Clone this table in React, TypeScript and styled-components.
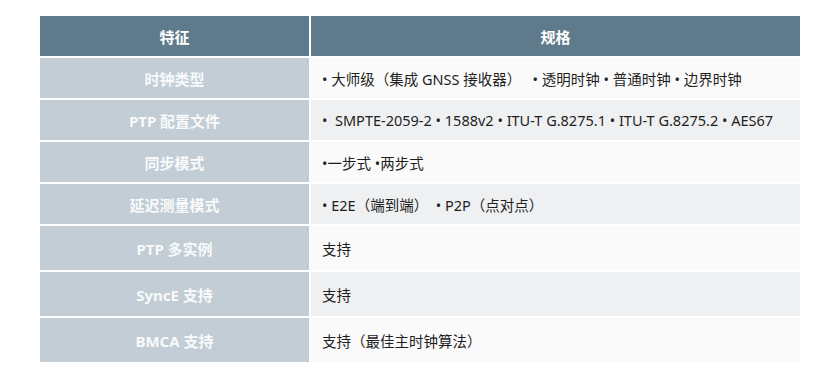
import React from 'react';
import styled, { createGlobalStyle } from 'styled-components';

const GlobalStyle = createGlobalStyle`
  html, body {
    margin: 0;
    padding: 0;
    background-color: #ffffff;
  }
`;

type Spec = {
  feature: string;
  detail: string;
  tall?: boolean;
};

const specs: Spec[] = [
  { feature: '时钟类型', detail: '• 大师级（集成 GNSS 接收器）   • 透明时钟 • 普通时钟 • 边界时钟' },
  { feature: 'PTP 配置文件', detail: '•  SMPTE-2059-2 • 1588v2 • ITU-T G.8275.1 • ITU-T G.8275.2 • AES67' },
  { feature: '同步模式', detail: '•一步式 •两步式' },
  { feature: '延迟测量模式', detail: '• E2E（端到端）  • P2P（点对点）' },
  { feature: 'PTP 多实例', detail: '支持', tall: true },
  { feature: 'SyncE 支持', detail: '支持', tall: true },
  { feature: 'BMCA 支持', detail: '支持（最佳主时钟算法）', tall: true },
];

const App = () => {
  return (
    <Page>
      <GlobalStyle />
      <SpecTable>
        <HeadCell>特征</HeadCell>
        <HeadCell>规格</HeadCell>
        {specs.map((spec, index) => (
          <React.Fragment key={spec.feature}>
            <FeatureCell $tall={spec.tall}>{spec.feature}</FeatureCell>
            <DetailCell $tall={spec.tall} $striped={index % 2 === 1}>
              {spec.detail}
            </DetailCell>
          </React.Fragment>
        ))}
      </SpecTable>
    </Page>
  );
};

export default App;

const Page = styled.div`
  width: 816px;
  height: 387px;
  box-sizing: border-box;
  padding: 16px 0 0 40px;
  overflow: hidden;
  font-family: 'Noto Sans', 'Noto Sans CJK SC', sans-serif;
`;

const SpecTable = styled.div`
  display: grid;
  grid-template-columns: 269px 489px;
  gap: 2px;
`;

const HeadCell = styled.div`
  display: flex;
  align-items: center;
  justify-content: center;
  height: 40px;
  background-color: #5f7a8a;
  color: #ffffff;
  font-size: 15px;
  font-weight: 700;
`;

const FeatureCell = styled.div<{ $tall?: boolean }>`
  display: flex;
  align-items: center;
  justify-content: center;
  height: ${(p) => (p.$tall ? '44px' : '40px')};
  background-color: #c2cdd5;
  color: #f8fafb;
  font-size: 15px;
  font-weight: 700;
`;

const DetailCell = styled.div<{ $tall?: boolean; $striped?: boolean }>`
  display: flex;
  align-items: center;
  height: ${(p) => (p.$tall ? '44px' : '40px')};
  padding-left: 11px;
  background-color: ${(p) => (p.$striped ? '#eef0f2' : '#fafafa')};
  color: #1f1f1f;
  font-size: 14.5px;
  white-space: pre;
`;
